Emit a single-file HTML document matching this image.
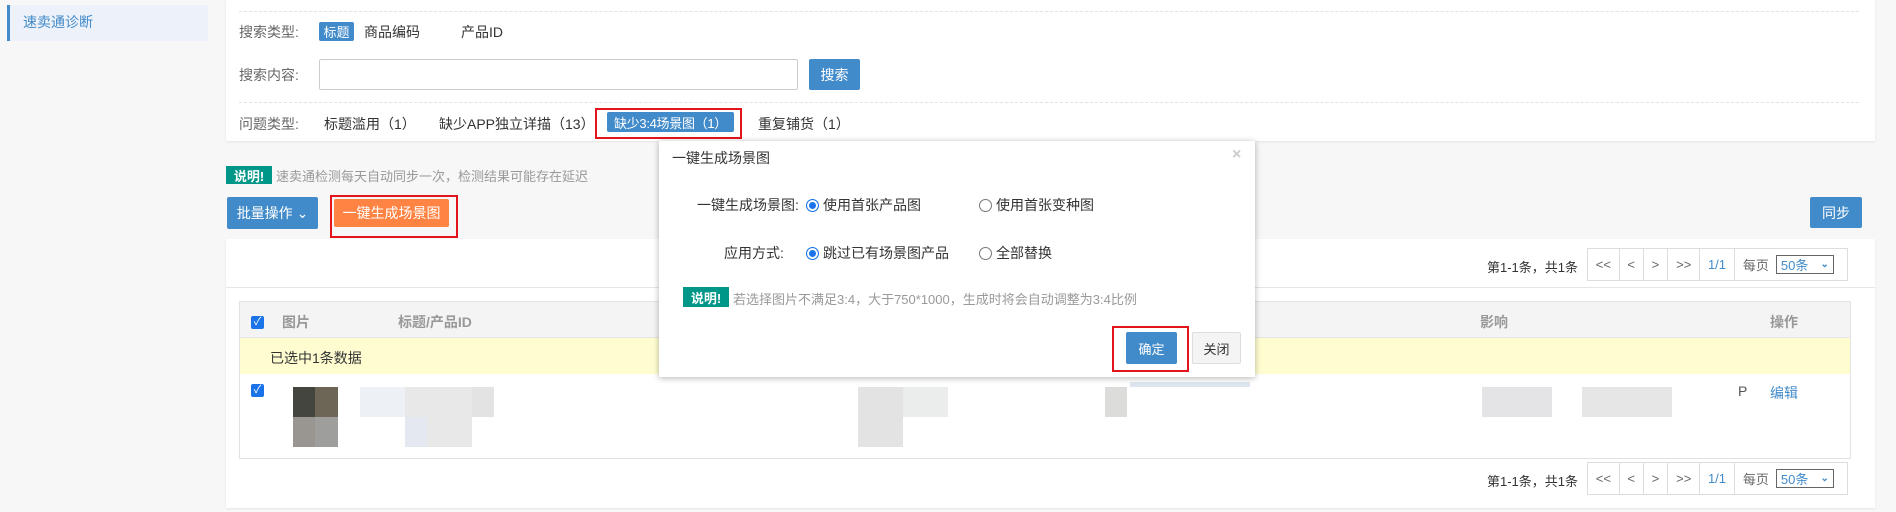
<!DOCTYPE html>
<html><head><meta charset="utf-8"><style>
*{box-sizing:border-box;margin:0;padding:0}
body{width:1896px;height:512px;background:#f7f7f7;font-family:"Liberation Sans","Noto Sans CJK SC",sans-serif;font-size:14px;color:#333;position:relative;overflow:hidden}
.a{position:absolute;white-space:nowrap}
.btn{position:absolute;color:#fff;display:flex;align-items:center;justify-content:center;border-radius:2px;white-space:nowrap}
.blue{background:#428bca}
.red{position:absolute;border:2px solid #e4141d}
.lbl{color:#666}
.pg{position:absolute;height:33px;border:1px solid #ddd;background:#fff;display:flex;font-size:13px;color:#666}
.pg span{border-right:1px solid #ddd;display:flex;align-items:center;justify-content:center}
.cb{position:absolute;width:13px;height:13px;background:#1a73e8;border-radius:2px;color:#fff;font-size:11px;line-height:13px;text-align:center}
.rad{display:inline-block;width:13px;height:13px;border-radius:50%;border:1px solid #777;vertical-align:-2px;margin-right:4px;background:#fff}
.rad.on{border:1px solid #1a73e8;box-shadow:inset 0 0 0 2px #fff;background:#1a73e8}
.tag{position:absolute;background:#009688;color:#fff;font-weight:bold;display:flex;align-items:center;justify-content:center;font-size:13px}
.g{position:absolute}
</style></head><body>
<div class="a" style="left:7px;top:5px;width:201px;height:36px;background:#edf1f9;border-left:3px solid #428bca"></div>
<div class="a" style="left:23px;top:12px;color:#428bca">速卖通诊断</div>

<div class="a" style="left:226px;top:0;width:1649px;height:141px;background:#fff;box-shadow:0 1px 2px #e5e5e5"></div>
<div class="a" style="left:239px;top:11px;width:1620px;border-top:1px dashed #e2e2e2"></div>
<div class="a" style="left:239px;top:102px;width:1620px;border-top:1px dashed #e2e2e2"></div>
<div class="a lbl" style="left:239px;top:22px">搜索类型:</div>
<div class="btn blue" style="left:319px;top:22px;width:35px;height:19px;font-size:13px">标题</div>
<div class="a" style="left:364px;top:22px">商品编码</div>
<div class="a" style="left:461px;top:22px">产品ID</div>
<div class="a lbl" style="left:239px;top:65px">搜索内容:</div>
<div class="a" style="left:319px;top:59px;width:479px;height:31px;border:1px solid #ccc;border-radius:2px;background:#fff"></div>
<div class="btn blue" style="left:809px;top:59px;width:51px;height:31px">搜索</div>
<div class="a lbl" style="left:239px;top:114px">问题类型:</div>
<div class="a" style="left:324px;top:114px">标题滥用（1）</div>
<div class="a" style="left:439px;top:114px">缺少APP独立详描（13）</div>
<div class="btn blue" style="left:607px;top:112px;width:127px;height:20px;font-size:13px;letter-spacing:-0.3px">缺少3:4场景图（1）</div>
<div class="red" style="left:595px;top:108px;width:147px;height:31px"></div>
<div class="a" style="left:758px;top:114px">重复铺货（1）</div>

<div class="tag" style="left:226px;top:166px;width:46px;height:18px">说明!</div>
<div class="a" style="left:276px;top:166px;color:#999;font-size:13px">速卖通检测每天自动同步一次，检测结果可能存在延迟</div>
<div class="btn blue" style="left:227px;top:197px;width:91px;height:32px">批量操作 ⌄</div>
<div class="btn" style="left:334px;top:199px;width:115px;height:28px;background:#ff8443">一键生成场景图</div>
<div class="red" style="left:330px;top:195px;width:128px;height:43px"></div>
<div class="btn blue" style="left:1810px;top:197px;width:52px;height:31px">同步</div>

<div class="a" style="left:226px;top:239px;width:1649px;height:269px;background:#fff;box-shadow:0 1px 2px #e5e5e5"></div>
<div class="a" style="left:1487px;top:257px;font-size:13px">第1-1条，共1条</div>
<div class="pg" style="left:1587px;top:248px;width:261px">
<span style="width:32px">&lt;&lt;</span><span style="width:24px">&lt;</span><span style="width:25px">&gt;</span><span style="width:32px">&gt;&gt;</span><span style="width:35px;color:#428bca">1/1</span><span style="width:113px;border:0;justify-content:flex-start;padding-left:8px">每页 <span style="border:1px solid #666;width:58px;height:19px;margin-left:7px;color:#428bca;justify-content:space-between;padding:0 4px">50条 <b style="font-size:10px">⌄</b></span></span></div>
<div class="a" style="left:226px;top:287px;width:1649px;border-top:1px solid #e6e6e6"></div>
<div class="a" style="left:239px;top:301px;width:1612px;height:158px;border:1px solid #e2e2e2"></div>
<div class="a" style="left:240px;top:302px;width:1610px;height:36px;background:#f4f4f4;border-bottom:1px solid #e6e6e6"></div>
<div class="a" style="left:240px;top:338px;width:1610px;height:36px;background:#fffdd0"></div>
<div class="cb" style="left:251px;top:316px">✓</div>
<div class="a" style="left:282px;top:312px;color:#999;font-weight:bold">图片</div>
<div class="a" style="left:398px;top:312px;color:#999;font-weight:bold">标题/产品ID</div>
<div class="a" style="left:1480px;top:312px;color:#999;font-weight:bold">影响</div>
<div class="a" style="left:1770px;top:312px;color:#999;font-weight:bold">操作</div>
<div class="a" style="left:270px;top:348px">已选中1条数据</div>
<div class="cb" style="left:251px;top:384px">✓</div>
<div class="g" style="left:293px;top:387px;width:22px;height:30px;background:#454540"></div>
<div class="g" style="left:315px;top:387px;width:23px;height:30px;background:#6d6556"></div>
<div class="g" style="left:293px;top:417px;width:22px;height:30px;background:#999590"></div>
<div class="g" style="left:315px;top:417px;width:23px;height:30px;background:#9e9e9c"></div>
<div class="g" style="left:360px;top:387px;width:45px;height:30px;background:#edf0f4"></div>
<div class="g" style="left:405px;top:387px;width:67px;height:60px;background:#e8e8e8"></div>
<div class="g" style="left:405px;top:417px;width:22px;height:30px;background:#e4e9f1"></div>
<div class="g" style="left:472px;top:387px;width:22px;height:30px;background:#e3e3e3"></div>
<div class="g" style="left:858px;top:387px;width:45px;height:60px;background:#e3e3e4"></div>
<div class="g" style="left:903px;top:387px;width:45px;height:30px;background:#ebecec"></div>
<div class="g" style="left:1105px;top:387px;width:22px;height:30px;background:#dcdcdb"></div>
<div class="g" style="left:1130px;top:382px;width:120px;height:5px;background:#dde6ef"></div>
<div class="g" style="left:1482px;top:387px;width:70px;height:30px;background:#e4e4e6"></div>
<div class="g" style="left:1582px;top:387px;width:90px;height:30px;background:#e6e6e6"></div>
<div class="a" style="left:1738px;top:383px;color:#555">P</div>
<div class="a" style="left:1770px;top:383px;color:#428bca">编辑</div>
<div class="a" style="left:1487px;top:471px;font-size:13px">第1-1条，共1条</div>
<div class="pg" style="left:1587px;top:462px;width:261px">
<span style="width:32px">&lt;&lt;</span><span style="width:24px">&lt;</span><span style="width:25px">&gt;</span><span style="width:32px">&gt;&gt;</span><span style="width:35px;color:#428bca">1/1</span><span style="width:113px;border:0;justify-content:flex-start;padding-left:8px">每页 <span style="border:1px solid #666;width:58px;height:19px;margin-left:7px;color:#428bca;justify-content:space-between;padding:0 4px">50条 <b style="font-size:10px">⌄</b></span></span></div>

<div class="a" style="left:659px;top:141px;width:596px;height:236px;background:#fff;box-shadow:0 1px 6px rgba(0,0,0,.3)"></div>
<div class="a" style="left:672px;top:148px;color:#333">一键生成场景图</div>
<div class="a" style="left:1232px;top:146px;color:#ccc;font-size:16px;font-weight:bold">×</div>
<div class="a" style="left:697px;top:195px">一键生成场景图:</div>
<div class="a" style="left:806px;top:195px"><span class="rad on"></span>使用首张产品图</div>
<div class="a" style="left:979px;top:195px"><span class="rad"></span>使用首张变种图</div>
<div class="a" style="left:724px;top:243px">应用方式:</div>
<div class="a" style="left:806px;top:243px"><span class="rad on"></span>跳过已有场景图产品</div>
<div class="a" style="left:979px;top:243px"><span class="rad"></span>全部替换</div>
<div class="tag" style="left:683px;top:287px;width:46px;height:20px">说明!</div>
<div class="a" style="left:733px;top:289px;color:#999;font-size:13px">若选择图片不满足3:4，大于750*1000，生成时将会自动调整为3:4比例</div>
<div class="btn blue" style="left:1126px;top:332px;width:51px;height:32px;font-size:13px">确定</div>
<div class="red" style="left:1112px;top:326px;width:77px;height:46px"></div>
<div class="btn" style="left:1192px;top:332px;width:49px;height:32px;background:#f4f4f4;border:1px solid #ddd;color:#333;font-size:13px">关闭</div>
</body></html>
